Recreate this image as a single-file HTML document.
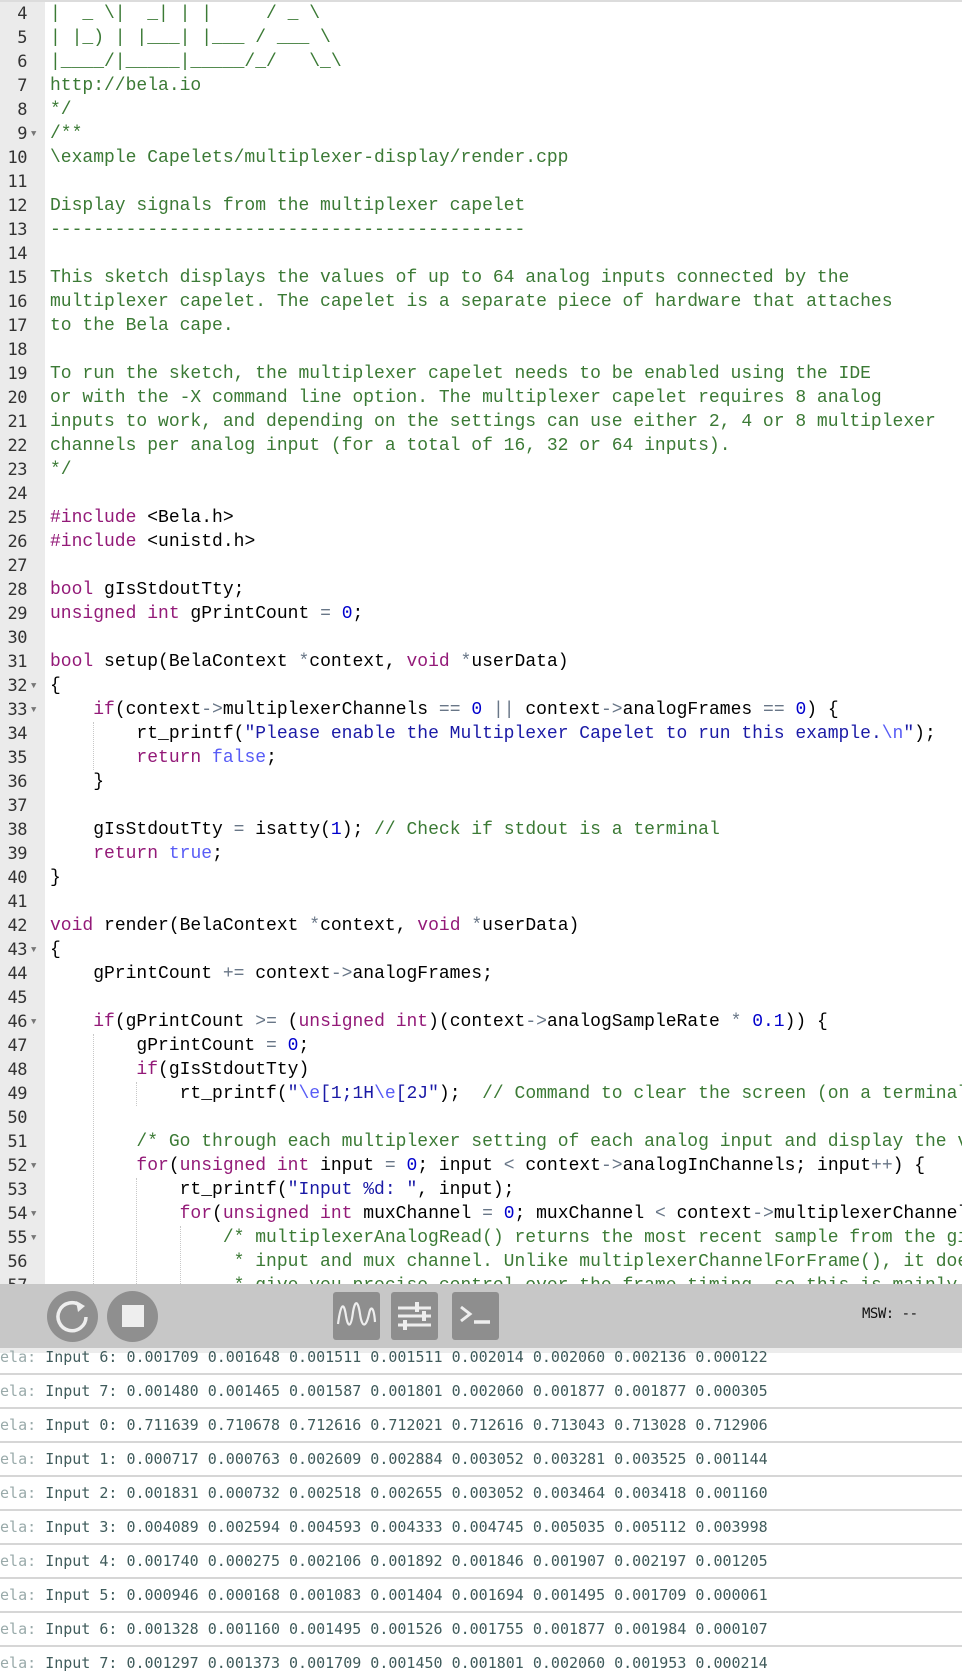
<!DOCTYPE html>
<html><head><meta charset="utf-8"><style>
*{margin:0;padding:0;box-sizing:border-box}
html,body{width:962px;height:1678px;overflow:hidden}
body{background:#fff;position:relative;font-family:"Liberation Mono",monospace}
#wrap{position:absolute;left:0;top:0;width:962px;height:1678px;overflow:hidden}
#top{position:absolute;left:0;top:0;width:962px;height:2px;background:#dcdcdc}
#gut{position:absolute;left:0;top:2px;width:45px;height:1290px;background:#ebebeb}
.ln{position:absolute;left:0;width:27px;text-align:right;font-size:17px;line-height:24px;height:24px;color:#333;font-family:"DejaVu Sans Mono","Liberation Mono",monospace;letter-spacing:-0.5px}
.fd{position:absolute;left:31px;font-size:9px;line-height:24px;color:#777}
.cl{position:absolute;left:50px;font-size:18px;line-height:24px;height:24px;white-space:pre;color:#000}
.c{color:#3b7a35}.k{color:#931a78}.n{color:#0000cd}.s{color:#1a1aa6}.o{color:#687687}.b{color:#585cf6}
.ig{position:absolute;width:0;border-left:1px dotted #c8c8c8}
#tb{position:absolute;left:0;top:1284px;width:962px;height:64px;background:#c7c7c7}
#tb2{position:absolute;left:0;top:1348px;width:962px;height:5px;background:#ececec}
.cb{position:absolute;top:1291px;width:51px;height:51px;border-radius:50%;background:#8f8f8f}
.sb{position:absolute;top:1292px;width:47px;height:48px;border-radius:3px;background:#8e8e8e}
#msw{position:absolute;left:862px;top:1306px;font-family:"DejaVu Sans Mono",monospace;font-size:14px;color:#111;letter-spacing:-0.5px}
.row{position:absolute;left:-9px;width:971px;height:34px;border-bottom:2px solid #d6d6d6;font-family:"DejaVu Sans Mono",monospace;font-size:15px;line-height:32px;color:#3f5b5b;white-space:pre;overflow:hidden}
.row span{color:#9aa}
</style></head><body><div id="wrap">
<div id="top"></div>
<div id="gut"></div>
<div id="code"></div>
<script>
var L={
4:'<span class="c">|  _ \\|  _| | |     / _ \\</span>',
5:'<span class="c">| |_) | |___| |___ / ___ \\</span>',
6:'<span class="c">|____/|_____|_____/_/   \\_\\</span>',
7:'<span class="c">http://bela.io</span>',
8:'<span class="c">*/</span>',
9:'<span class="c">/**</span>',
10:'<span class="c">\\example Capelets/multiplexer-display/render.cpp</span>',
11:'',
12:'<span class="c">Display signals from the multiplexer capelet</span>',
13:'<span class="c">--------------------------------------------</span>',
14:'',
15:'<span class="c">This sketch displays the values of up to 64 analog inputs connected by the</span>',
16:'<span class="c">multiplexer capelet. The capelet is a separate piece of hardware that attaches</span>',
17:'<span class="c">to the Bela cape.</span>',
18:'',
19:'<span class="c">To run the sketch, the multiplexer capelet needs to be enabled using the IDE</span>',
20:'<span class="c">or with the -X command line option. The multiplexer capelet requires 8 analog</span>',
21:'<span class="c">inputs to work, and depending on the settings can use either 2, 4 or 8 multiplexer</span>',
22:'<span class="c">channels per analog input (for a total of 16, 32 or 64 inputs).</span>',
23:'<span class="c">*/</span>',
24:'',
25:'<span class="k">#include</span> &lt;Bela.h&gt;',
26:'<span class="k">#include</span> &lt;unistd.h&gt;',
27:'',
28:'<span class="k">bool</span> gIsStdoutTty;',
29:'<span class="k">unsigned int</span> gPrintCount <span class="o">=</span> <span class="n">0</span>;',
30:'',
31:'<span class="k">bool</span> setup(BelaContext <span class="o">*</span>context, <span class="k">void</span> <span class="o">*</span>userData)',
32:'{',
33:'    <span class="k">if</span>(context<span class="o">-&gt;</span>multiplexerChannels <span class="o">==</span> <span class="n">0</span> <span class="o">||</span> context<span class="o">-&gt;</span>analogFrames <span class="o">==</span> <span class="n">0</span>) {',
34:'        rt_printf(<span class="s">"Please enable the Multiplexer Capelet to run this example.<span class="b">\\n</span>"</span>);',
35:'        <span class="k">return</span> <span class="b">false</span>;',
36:'    }',
37:'',
38:'    gIsStdoutTty <span class="o">=</span> isatty(<span class="n">1</span>); <span class="c">// Check if stdout is a terminal</span>',
39:'    <span class="k">return</span> <span class="b">true</span>;',
40:'}',
41:'',
42:'<span class="k">void</span> render(BelaContext <span class="o">*</span>context, <span class="k">void</span> <span class="o">*</span>userData)',
43:'{',
44:'    gPrintCount <span class="o">+=</span> context<span class="o">-&gt;</span>analogFrames;',
45:'',
46:'    <span class="k">if</span>(gPrintCount <span class="o">&gt;=</span> (<span class="k">unsigned int</span>)(context<span class="o">-&gt;</span>analogSampleRate <span class="o">*</span> <span class="n">0.1</span>)) {',
47:'        gPrintCount <span class="o">=</span> <span class="n">0</span>;',
48:'        <span class="k">if</span>(gIsStdoutTty)',
49:'            rt_printf(<span class="s">"<span class="b">\\e</span>[1;1H<span class="b">\\e</span>[2J"</span>);  <span class="c">// Command to clear the</span>',
50:'',
51:'        <span class="c">/* Go through each multiplexer setting of each analog input and</span>',
52:'        <span class="k">for</span>(<span class="k">unsigned int</span> input <span class="o">=</span> <span class="n">0</span>; input <span class="o">&lt;</span> context<span class="o">-&gt;</span>analogInChannels; input<span class="o">++</span>) {',
53:'            rt_printf(<span class="s">"Input %d: "</span>, input);',
54:'            <span class="k">for</span>(<span class="k">unsigned int</span> muxChannel <span class="o">=</span> <span class="n">0</span>; muxChannel <span class="o">&lt;</span> context<span class="o">-&gt;</span>multiplexer',
55:'                <span class="c">/* multiplexerAnalogRead() returns the most recent sample</span>',
56:'<span class="c">                 * input and mux channel. Unlike multiplexerChannelForFrame(), it</span>',
57:'<span class="c">                 * give you precise control over the frame timing, so this</span>'
};
L[49]+='<span class="c"> screen (on a terminal)</span>';
L[51]+='<span class="c"> display the values */</span>';
L[54]+='Channels; muxChannel<span class="o">++</span>) {';
L[55]+='<span class="c"> from the given</span>';
L[56]+='<span class="c"> does not</span>';
L[57]+='<span class="c"> is mainly</span>';
var folds={9:1,32:1,33:1,43:1,46:1,52:1,54:1,55:1};
var h='';
for(var n=4;n<=57;n++){var t=2+(n-4)*24;
h+='<div class="ln" style="top:'+t+'px">'+n+'</div>';
if(folds[n])h+='<div class="fd" style="top:'+t+'px">&#9660;</div>';
h+='<div class="cl" style="top:'+t+'px;width:912px;overflow:hidden">'+L[n]+'</div>';}
function ig(x,a,b){h+='<div class="ig" style="left:'+x+'px;top:'+(2+(a-4)*24)+'px;height:'+((b-a+1)*24)+'px"></div>';}
var cw=10.8;
ig(50+4*cw,34,35);ig(50+4*cw,47,57);ig(50+8*cw,49,49);ig(50+8*cw,53,57);ig(50+12*cw,55,57);
document.getElementById('code').innerHTML=h;
</script>
<div id="tb"></div><div id="tb2"></div>
<div class="cb" style="left:47px"></div>
<svg style="position:absolute;left:47px;top:1291px" width="51" height="51" viewBox="0 0 51 51"><path d="M34 15 A14 14 0 1 0 39 26" fill="none" stroke="#eee" stroke-width="3.5"/><path d="M29 10 L38 15 L31 21 Z" fill="#eee"/></svg>
<div class="cb" style="left:107px"></div>
<div style="position:absolute;left:122px;top:1305px;width:22px;height:22px;background:#eee"></div>
<div class="sb" style="left:333px"></div>
<svg style="position:absolute;left:333px;top:1292px" width="47" height="48"><path d="M5 32 C8 10 11 10 13 24 C15 36 18 36 20 20 C22 8 25 8 27 22 C29 36 33 36 36 22 C38 12 41 16 42 30" fill="none" stroke="#eee" stroke-width="2.2"/></svg>
<div class="sb" style="left:391px"></div>
<svg style="position:absolute;left:391px;top:1292px" width="47" height="48"><g stroke="#eee" stroke-width="3"><path d="M7 16H40M7 24H40M7 33H40"/></g><g stroke="#eee" stroke-width="4"><path d="M26 10V20M33 19V29M14 28V38"/></g></svg>
<div class="sb" style="left:452px"></div>
<svg style="position:absolute;left:452px;top:1292px" width="47" height="48"><path d="M9 15 L18 22 L9 29" fill="none" stroke="#eee" stroke-width="3"/><path d="M22 30H38" stroke="#eee" stroke-width="3.5"/></svg>
<div id="msw">MSW: --</div>
<div id="con"></div>
<script>
var R=["Input 6: 0.001709 0.001648 0.001511 0.001511 0.002014 0.002060 0.002136 0.000122",
"Input 7: 0.001480 0.001465 0.001587 0.001801 0.002060 0.001877 0.001877 0.000305",
"Input 0: 0.711639 0.710678 0.712616 0.712021 0.712616 0.713043 0.713028 0.712906",
"Input 1: 0.000717 0.000763 0.002609 0.002884 0.003052 0.003281 0.003525 0.001144",
"Input 2: 0.001831 0.000732 0.002518 0.002655 0.003052 0.003464 0.003418 0.001160",
"Input 3: 0.004089 0.002594 0.004593 0.004333 0.004745 0.005035 0.005112 0.003998",
"Input 4: 0.001740 0.000275 0.002106 0.001892 0.001846 0.001907 0.002197 0.001205",
"Input 5: 0.000946 0.000168 0.001083 0.001404 0.001694 0.001495 0.001709 0.000061",
"Input 6: 0.001328 0.001160 0.001495 0.001526 0.001755 0.001877 0.001984 0.000107",
"Input 7: 0.001297 0.001373 0.001709 0.001450 0.001801 0.002060 0.001953 0.000214"];
var c='';for(var i=0;i<R.length;i++){c+='<div class="row" style="top:'+(1341+34*i)+'px"><span>Bela: </span>'+R[i]+'</div>';}
document.getElementById('con').innerHTML=c;
</script>
</div></body></html>
